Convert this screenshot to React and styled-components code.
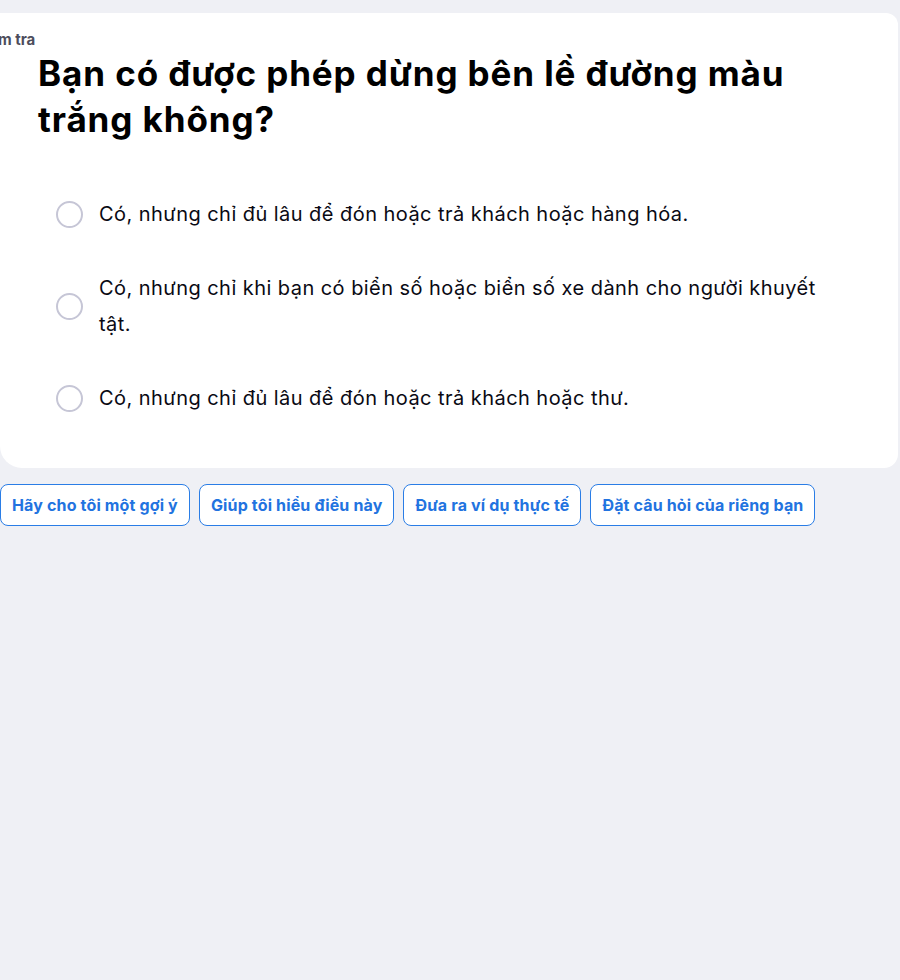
import React from "react";
import styled, { createGlobalStyle } from "styled-components";

const Global = createGlobalStyle`
  html, body { margin: 0; padding: 0; background: #eff0f5; }
  body { font-family: "Inter", "Noto Sans", sans-serif; overflow: hidden; }
`;

const Page = styled.div`
  width: 900px;
  min-height: 980px;
  padding-top: 13px;
  box-sizing: border-box;
  display: flex;
  flex-direction: column;
`;

const Card = styled.section`
  width: 898px;
  background: #ffffff;
  border-radius: 0 12px 14px 22px;
  padding: 20px 0 52px 0;
  box-sizing: border-box;
  overflow: hidden;
`;

const Label = styled.div`
  margin-left: -26px;
  font-size: 15px;
  font-weight: 700;
  color: #4d4d5c;
  line-height: 14px;
`;

const Title = styled.h1`
  margin: 3px 0 0 38px;
  width: 800px;
  font-size: 35px;
  font-weight: 700;
  letter-spacing: 0.9px;
  line-height: 46px;
  color: #000;
`;

const Options = styled.div`
  margin: 54px 0 0 56px;
  display: flex;
  flex-direction: column;
  gap: 38px;
`;

const Option = styled.label`
  display: flex;
  align-items: center;
  gap: 16px;
  width: 775px;
  cursor: pointer;
`;

const Radio = styled.span`
  flex: 0 0 auto;
  width: 27px;
  height: 27px;
  border-radius: 50%;
  border: 2px solid #c6c6d6;
  box-sizing: border-box;
`;

const OptionText = styled.span`
  font-size: 20px;
  letter-spacing: 0.45px;
  line-height: 36px;
  color: #0a0a14;
`;

const Chips = styled.div`
  display: flex;
  gap: 9px;
  margin-top: 16px;
`;

const Chip = styled.button`
  height: 42px;
  padding: 0 11px;
  border: 1px solid #2a7de6;
  border-radius: 8px;
  background: #ffffff;
  color: #2273e0;
  font-family: inherit;
  font-size: 16px;
  font-weight: 700;
  letter-spacing: 0.15px;
  cursor: pointer;
`;

const options = [
  "Có, nhưng chỉ đủ lâu để đón hoặc trả khách hoặc hàng hóa.",
  "Có, nhưng chỉ khi bạn có biển số hoặc biển số xe dành cho người khuyết tật.",
  "Có, nhưng chỉ đủ lâu để đón hoặc trả khách hoặc thư.",
];

const chips = [
  "Hãy cho tôi một gợi ý",
  "Giúp tôi hiểu điều này",
  "Đưa ra ví dụ thực tế",
  "Đặt câu hỏi của riêng bạn",
];

export default function App() {
  return (
    <>
      <Global />
      <Page>
        <Card>
          <Label>Kiểm tra</Label>
          <Title>Bạn có được phép dừng bên lề đường màu trắng không?</Title>
          <Options>
            {options.map((o) => (
              <Option key={o}>
                <Radio />
                <OptionText>{o}</OptionText>
              </Option>
            ))}
          </Options>
        </Card>
        <Chips>
          {chips.map((c) => (
            <Chip key={c}>{c}</Chip>
          ))}
        </Chips>
      </Page>
    </>
  );
}
